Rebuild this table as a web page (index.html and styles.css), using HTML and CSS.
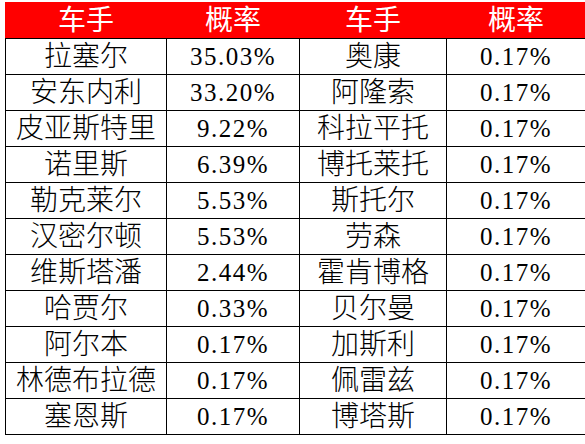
FILE: index.html
```html
<!DOCTYPE html>
<html lang="zh-CN">
<head>
  <meta charset="UTF-8">
  <title>车手概率</title>
  <link rel="stylesheet" href="styles.css">
</head>
<body>

<table class="odds">
  <thead>
    <tr>
      <th class="c1">车手</th>
      <th class="c2">概率</th>
      <th class="c3">车手</th>
      <th class="c4">概率</th>
    </tr>
  </thead>
  <tbody>
    <tr><td>拉塞尔</td><td class="num">35.03%</td><td>奥康</td><td class="num">0.17%</td></tr>
    <tr><td>安东内利</td><td class="num">33.20%</td><td>阿隆索</td><td class="num">0.17%</td></tr>
    <tr><td>皮亚斯特里</td><td class="num">9.22%</td><td>科拉平托</td><td class="num">0.17%</td></tr>
    <tr><td>诺里斯</td><td class="num">6.39%</td><td>博托莱托</td><td class="num">0.17%</td></tr>
    <tr><td>勒克莱尔</td><td class="num">5.53%</td><td>斯托尔</td><td class="num">0.17%</td></tr>
    <tr><td>汉密尔顿</td><td class="num">5.53%</td><td>劳森</td><td class="num">0.17%</td></tr>
    <tr><td>维斯塔潘</td><td class="num">2.44%</td><td>霍肯博格</td><td class="num">0.17%</td></tr>
    <tr><td>哈贾尔</td><td class="num">0.33%</td><td>贝尔曼</td><td class="num">0.17%</td></tr>
    <tr><td>阿尔本</td><td class="num">0.17%</td><td>加斯利</td><td class="num">0.17%</td></tr>
    <tr><td>林德布拉德</td><td class="num">0.17%</td><td>佩雷兹</td><td class="num">0.17%</td></tr>
    <tr><td>塞恩斯</td><td class="num">0.17%</td><td>博塔斯</td><td class="num">0.17%</td></tr>
  </tbody>
</table>

</body>
</html>
```

FILE: styles.css
```css
body {
  margin: 0;
  padding: 2px 0 0 5px;
  background-color: #ffffff;
  font-family: "Liberation Serif", "Noto Sans CJK SC", serif;
}

.odds {
  border-collapse: collapse;
  table-layout: fixed;
  width: 577px;
}

.c1 { width: 160px; }
.c2 { width: 132px; }
.c3 { width: 146px; }
.c4 { width: 138px; }

th, td {
  height: 35px;
  padding: 0;
  text-align: center;
  vertical-align: middle;
  border: 1px solid #000000;
  font-size: 28px;
  font-weight: 300;
  line-height: 34px;
  color: #000000;
}

th {
  background-color: #ff0000;
  color: #ffffff;
  font-weight: 400;
  border-color: #ff0000;
  border-bottom-color: #000000;
}

.num {
  font-size: 25px;
  font-weight: 400;
  letter-spacing: 1.5px;
}
```
